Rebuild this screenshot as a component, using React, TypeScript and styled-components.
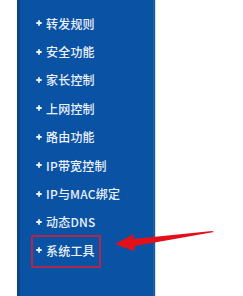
import React from "react";
import styled, { createGlobalStyle } from "styled-components";

const Global = createGlobalStyle`
  html, body { margin: 0; padding: 0; background: #ffffff; }
  body { font-family: "Noto Sans CJK SC", "Noto Sans", sans-serif; }
`;

const Page = styled.div`
  position: relative;
  width: 243px;
  height: 296px;
  overflow: hidden;
  background: #ffffff;
  display: flex;
  padding-left: 17px;
  box-sizing: border-box;
`;

const Panel = styled.nav`
  width: 133px;
  height: 296px;
  background: #0a52a4;
  border-left: 3px solid #0b4589;
  border-right: 2px solid #1d5da3;
  box-shadow: 1px 0 0 #cfe0f2;
  padding-top: 9px;
  box-sizing: content-box;
  display: flex;
  flex-direction: column;
`;

const Item = styled.div`
  position: relative;
  height: 28.4px;
  display: flex;
  align-items: center;
  padding-left: 16px;
  gap: 4px;
  color: #eaf1fa;
  font-size: 12px;
  font-weight: 500;
  letter-spacing: 0.2px;
  white-space: nowrap;
`;

const Bullet = styled.svg`
  width: 6px;
  height: 6px;
  flex: none;
`;

const Highlight = styled.div`
  position: absolute;
  left: 11px;
  top: -1px;
  width: 66px;
  height: 29px;
  border: 2px solid #b0274a;
  border-radius: 1px;
`;

const Arrow = styled.svg`
  position: absolute;
  left: 112px;
  top: 226px;
  width: 104px;
  height: 26px;
`;

const items = [
  "转发规则",
  "安全功能",
  "家长控制",
  "上网控制",
  "路由功能",
  "IP带宽控制",
  "IP与MAC绑定",
  "动态DNS",
  "系统工具",
];

export default function App() {
  return (
    <Page>
      <Global />
      <Panel>
        {items.map((t, i) => (
          <Item key={t}>
            <Bullet viewBox="0 0 6 6">
              <path d="M3 0.3 V5.7 M0.3 3 H5.7" stroke="#eef3fa" strokeWidth="1.8" />
            </Bullet>
            {t}
            {i === items.length - 1 && <Highlight />}
          </Item>
        ))}
      </Panel>
      <Arrow viewBox="0 0 104 26">
        <path
          d="M3 18 L22 8 L21 13 L100 5 L102 6 L23 20 L22 25 Z"
          fill="#e3101a"
        />
      </Arrow>
    </Page>
  );
}
